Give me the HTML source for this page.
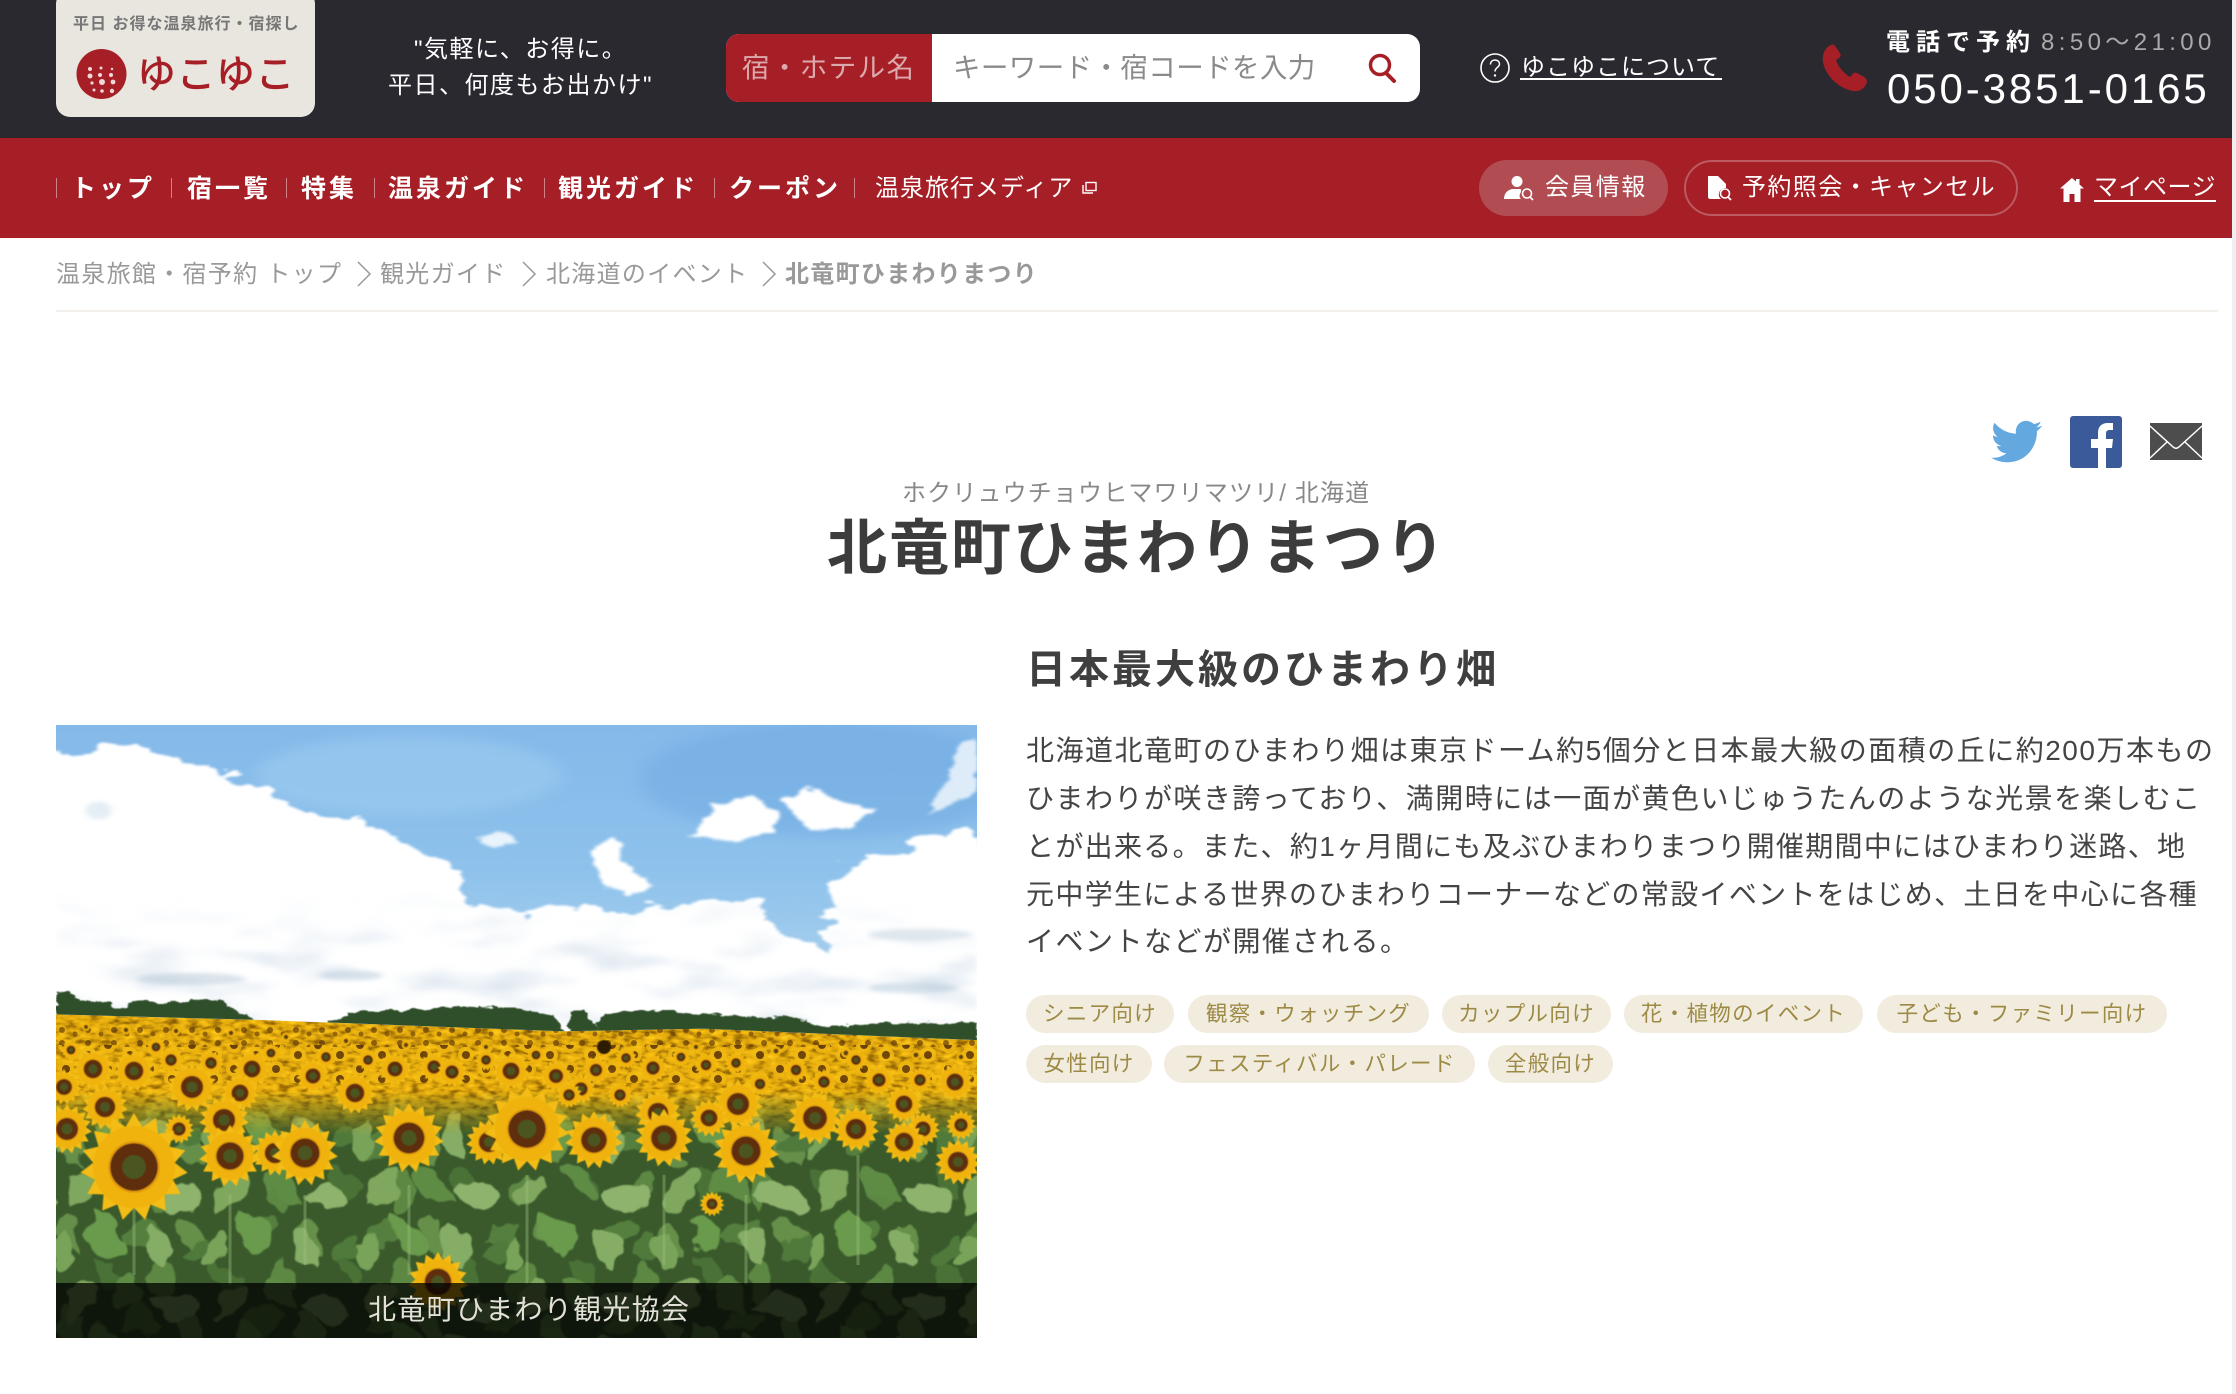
<!DOCTYPE html>
<html lang="ja"><head><meta charset="utf-8"><title>北竜町ひまわりまつり</title>
<style>
html,body{margin:0;padding:0;background:#fff}
#p{position:relative;width:2236px;height:1394px;overflow:hidden;background:#fff;font-family:"Liberation Sans","Noto Sans CJK JP",sans-serif}
.b{position:absolute}
.t{position:absolute;white-space:nowrap;line-height:40px;height:40px}
.w{color:#fff}
.n{font-size:25px;font-weight:700;letter-spacing:3px;color:#fff;top:169px}
.s{position:absolute;width:1px;height:20px;top:178px;background:rgba(255,255,255,.45)}
.c{font-size:24px;letter-spacing:1.300px;color:#999;top:255px}
.l{font-size:28px;letter-spacing:1.500px;color:#444;left:1026px}
.g{position:absolute;height:38px;line-height:38px;border-radius:19px;background:#f2ecdf;color:#9c8a45;font-size:21.500px;letter-spacing:1.300px;text-align:center;white-space:nowrap}
svg{position:absolute;overflow:visible}
</style></head><body><div id="p">
<div class="b" style="left:0;top:0;width:2232px;height:138px;background:#2a2930"></div>
<div class="b" style="left:0;top:138px;width:2232px;height:100px;background:#a71f26"></div>
<div class="b" style="left:2232px;top:0;width:4px;height:1394px;background:#efefef"></div>

<div class="b" style="left:56px;top:-10px;width:259px;height:127px;background:#e9e6df;border-radius:14px"></div>
<div class="t" style="left:73px;top:5px;font-size:16px;font-weight:700;letter-spacing:1px;color:#777">平日 お得な温泉旅行・宿探し</div>
<svg style="left:0;top:0" width="320" height="120"><circle cx="101.500" cy="74" r="25" fill="#a71f26"/><g fill="#f0d8d8"><circle cx="90" cy="69" r="2"/><circle cx="101" cy="68" r="1.500"/><circle cx="112" cy="69" r="1.200"/><circle cx="90" cy="76" r="2.500"/><circle cx="100" cy="75" r="2"/><circle cx="111" cy="75" r="2"/><circle cx="92" cy="83" r="1.600"/><circle cx="102" cy="82" r="3"/><circle cx="113" cy="82" r="2.400"/><circle cx="94" cy="90" r="1.500"/><circle cx="102" cy="91" r="1.800"/><circle cx="112" cy="91" r="2.200"/></g></svg>
<div class="t" style="left:137px;top:56px;font-size:39px;font-weight:500;letter-spacing:.5px;color:#a71f26">ゆこゆこ</div>

<div class="t w" style="left:414px;top:30px;font-size:24px;letter-spacing:1.500px">"気軽に、お得に。</div>
<div class="t w" style="left:388px;top:66px;font-size:24px;letter-spacing:1.500px">平日、何度もお出かけ"</div>

<div class="b" style="left:726px;top:34px;width:694px;height:68px;background:#fff;border-radius:13px"></div>
<div class="b" style="left:726px;top:34px;width:206px;height:68px;background:#a71f26;border-radius:13px 0 0 13px"></div>
<div class="t" style="left:742px;top:48px;font-size:27.500px;letter-spacing:1.400px;color:#dba9ac">宿・ホテル名</div>
<div class="t" style="left:953px;top:48px;font-size:27.500px;letter-spacing:.4px;color:#8a8a8a">キーワード・宿コードを入力</div>
<svg style="left:0;top:0" width="1440" height="110"><circle cx="1380" cy="65" r="9.500" fill="none" stroke="#a71f26" stroke-width="3.500"/><path d="M1386 73L1394 81" stroke="#a71f26" stroke-width="4" stroke-linecap="round"/></svg>

<svg style="left:1480px;top:52px" width="30" height="32"><circle cx="15" cy="16" r="14" fill="none" stroke="#fff" stroke-width="1.600"/><path d="M10.500 12.500C10.500 9.500 12.500 8 15 8C17.800 8 19.500 9.800 19.500 12C19.500 15.500 15 15.500 15 19.500" fill="none" stroke="#fff" stroke-width="1.500"/><circle cx="15" cy="23.500" r="1.200" fill="#fff"/></svg>
<div class="t w" style="left:1521px;top:48px;font-size:24px;letter-spacing:1px">ゆこゆこについて</div>
<div class="b" style="left:1520px;top:78px;width:202px;height:2px;background:#fff"></div>

<svg style="left:1823px;top:44px" width="44" height="48"><path fill="#a71f26" d="M8 1C3 3-1 9 0 18C2 30 14 44 30 47C36 48 42 45 44 38C44 36 43 34 41 33L34 29C32 28 30 29 29 31L27 33C20 29 15 22 13 16L16 14C18 13 18 11 17 9L12 2C11 0 9 0 8 1Z"/></svg>
<div class="t w" style="left:1886px;top:23px;font-size:24px;font-weight:700;letter-spacing:6px">電話で予約</div>
<div class="t" style="left:2041px;top:23px;font-size:24px;letter-spacing:4.400px;color:#a9a9a9">8:50〜21:00</div>
<div class="t w" style="left:1887px;top:69px;font-size:42px;letter-spacing:2.900px">050-3851-0165</div>

<div class="s" style="left:56px"></div><div class="s" style="left:171px"></div><div class="s" style="left:286px"></div><div class="s" style="left:374px"></div><div class="s" style="left:544px"></div><div class="s" style="left:714px"></div><div class="s" style="left:854px"></div>
<div class="t n" style="left:71px">トップ</div>
<div class="t n" style="left:187px">宿一覧</div>
<div class="t n" style="left:301px">特集</div>
<div class="t n" style="left:388px">温泉ガイド</div>
<div class="t n" style="left:558px">観光ガイド</div>
<div class="t n" style="left:729px">クーポン</div>
<div class="t w" style="left:875px;top:169px;font-size:24px;letter-spacing:1px">温泉旅行メディア</div>
<svg style="left:1082px;top:181px" width="16" height="14" fill="none" stroke="#fff" stroke-width="1.400"><rect x="4" y="1.500" width="10" height="8"/><path d="M1 4V12H11"/></svg>

<div class="b" style="left:1479px;top:160px;width:189px;height:56px;border-radius:28px;background:#b14c53"></div>
<div class="b" style="left:1684px;top:160px;width:330px;height:52px;border-radius:28px;border:2px solid #bb5a60"></div>
<svg style="left:1500px;top:172px" width="40" height="32"><circle cx="17" cy="9.500" r="5.500" fill="#fff"/><path fill="#fff" d="M4 27C4 21 8 17 14 17H20C22 17 21 20 20 22C19 24 20 26 21 27Z"/><circle cx="27" cy="21.500" r="4.500" fill="none" stroke="#fff" stroke-width="1.600"/><path d="M30 25L33 28" stroke="#fff" stroke-width="1.800"/></svg>
<div class="t w" style="left:1545px;top:168px;font-size:24px;letter-spacing:1.400px">会員情報</div>
<svg style="left:1705px;top:172px" width="36" height="32"><path fill="#fff" d="M3 4H13L21 12V16C16 16 13 20 14 24C14.500 25.500 15 26 16 27H5C4 27 3 26 3 25Z"/><circle cx="20" cy="21.500" r="4.500" fill="none" stroke="#fff" stroke-width="1.600"/><path d="M23 25L26 28" stroke="#fff" stroke-width="1.800"/></svg>
<div class="t w" style="left:1742px;top:168px;font-size:24px;letter-spacing:1.400px">予約照会・キャンセル</div>
<svg style="left:2060px;top:178px" width="24" height="24"><path fill="#fff" d="M12 0L16 3.500V1H19.500V6.500L24 10.500H20.500V24H14.500V16H9.500V24H3.500V10.500H0Z"/></svg>
<div class="t w" style="left:2094px;top:168px;font-size:24px;letter-spacing:.5px">マイページ</div>
<div class="b" style="left:2094px;top:200px;width:122px;height:2px;background:#fff"></div>

<div class="t c" style="left:56px">温泉旅館・宿予約 トップ</div>
<div class="t c" style="left:380px">観光ガイド</div>
<div class="t c" style="left:546px">北海道のイベント</div>
<div class="t c" style="left:785px;font-weight:700">北竜町ひまわりまつり</div>
<svg style="left:0;top:255px" width="800" height="40" fill="none" stroke="#999" stroke-width="1.500"><path d="M358 7L370 19L358 31M523 7L535 19L523 31M763 7L775 19L763 31"/></svg>
<div class="b" style="left:56px;top:310px;width:2162px;height:2px;background:#f3f0eb"></div>

<svg style="left:1991px;top:416px" width="52" height="50"><path fill="#64a8e0" transform="scale(2.130)" d="M23.950 4.570a10 10 0 0 1-2.830.78 4.960 4.960 0 0 0 2.160-2.720 9.900 9.900 0 0 1-3.130 1.200 4.920 4.920 0 0 0-8.390 4.480C7.690 8.100 4.070 6.130 1.640 3.160a4.820 4.820 0 0 0-.67 2.480c0 1.710.87 3.210 2.190 4.100a4.900 4.900 0 0 1-2.230-.62v.06a4.920 4.920 0 0 0 3.950 4.830 5 5 0 0 1-2.210.08 4.940 4.940 0 0 0 4.600 3.420A9.870 9.870 0 0 1 0 19.540a13.940 13.940 0 0 0 7.550 2.210c9.050 0 14-7.500 14-13.980 0-.21 0-.42-.02-.63a9.940 9.940 0 0 0 2.460-2.550z"/></svg>
<svg style="left:0;top:0" width="2236" height="500"><rect x="2070" y="416" width="52" height="52" rx="3" fill="#3b5a9a"/><path fill="#fff" d="M2106 468V448H2112L2113 439H2106V434C2106 431 2107 430 2110 430H2113V423H2108C2101 423 2098 427 2098 433V439H2091V448H2098V468Z"/><rect x="2150" y="423" width="52" height="37" fill="#4d4d4d"/><path fill="none" stroke="#fff" stroke-width="1.500" d="M2150 426L2172 446C2175 449 2177 449 2180 446L2202 426M2150 458L2167 442M2202 458L2185 442"/></svg>

<div class="t" style="left:902px;top:474px;font-size:24px;letter-spacing:1.150px;color:#888">ホクリュウチョウヒマワリマツリ/ 北海道</div>
<div class="t" style="left:827px;top:529px;font-size:60px;font-weight:700;letter-spacing:2px;color:#3c3c3c">北竜町ひまわりまつり</div>
<div class="t" style="left:1026px;top:650px;font-size:40px;font-weight:700;letter-spacing:3px;color:#3f3f3f">日本最大級のひまわり畑</div>
<div class="t l" style="top:731px">北海道北竜町のひまわり畑は東京ドーム約5個分と日本最大級の面積の丘に約200万本もの</div>
<div class="t l" style="top:779px;letter-spacing:1.470px">ひまわりが咲き誇っており、満開時には一面が黄色いじゅうたんのような光景を楽しむこ</div>
<div class="t l" style="top:827px;letter-spacing:1.320px">とが出来る。また、約1ヶ月間にも及ぶひまわりまつり開催期間中にはひまわり迷路、地</div>
<div class="t l" style="top:875px;letter-spacing:1.320px">元中学生による世界のひまわりコーナーなどの常設イベントをはじめ、土日を中心に各種</div>
<div class="t l" style="top:922px">イベントなどが開催される。</div>

<div class="g" style="left:1026px;top:995px;width:148px">シニア向け</div>
<div class="g" style="left:1188px;top:995px;width:241px">観察・ウォッチング</div>
<div class="g" style="left:1442px;top:995px;width:169px">カップル向け</div>
<div class="g" style="left:1624px;top:995px;width:239px">花・植物のイベント</div>
<div class="g" style="left:1877px;top:995px;width:290px">子ども・ファミリー向け</div>
<div class="g" style="left:1026px;top:1045px;width:126px">女性向け</div>
<div class="g" style="left:1164px;top:1045px;width:311px">フェスティバル・パレード</div>
<div class="g" style="left:1488px;top:1045px;width:125px">全般向け</div>

<svg style="left:56px;top:725px;overflow:hidden" width="921" height="613" viewBox="0 0 921 613">
<defs>
<filter id="lf" x="-.05" y="-.05" width="1.100" height="1.100" color-interpolation-filters="sRGB"><feTurbulence type="fractalNoise" baseFrequency=".03" numOctaves="3" seed="11" result="n"/><feDisplacementMap in="SourceGraphic" in2="n" scale="26" xChannelSelector="R" yChannelSelector="G" result="d"/><feGaussianBlur in="d" stdDeviation=".8"/></filter>
<filter id="yn" x="0" y="0" width="1" height="1" color-interpolation-filters="sRGB"><feTurbulence type="fractalNoise" baseFrequency=".09 .2" numOctaves="2" seed="3"/><feColorMatrix values="1 0 0 0 0 1 0 0 0 0 1 0 0 0 0 0 0 0 0 1"/><feComponentTransfer><feFuncR type="table" tableValues=".45 .6 .88 .98 1"/><feFuncG type="table" tableValues=".28 .42 .66 .76 .85"/><feFuncB type="table" tableValues="0 .02 .05 .08 .15"/></feComponentTransfer></filter>
<filter id="cl" x="-.1" y="-.1" width="1.200" height="1.200" color-interpolation-filters="sRGB"><feTurbulence type="fractalNoise" baseFrequency=".014 .024" numOctaves="4" seed="5" result="n"/><feDisplacementMap in="SourceGraphic" in2="n" scale="75" xChannelSelector="R" yChannelSelector="G"/><feGaussianBlur stdDeviation="2.500"/></filter>
<filter id="cs" x="-.3" y="-.3" width="1.600" height="1.600" color-interpolation-filters="sRGB"><feTurbulence type="fractalNoise" baseFrequency=".03 .05" numOctaves="3" seed="9" result="n"/><feDisplacementMap in="SourceGraphic" in2="n" scale="28" xChannelSelector="R" yChannelSelector="G"/><feGaussianBlur stdDeviation="3"/></filter>
<filter id="tr" x="-.05" y="-.3" width="1.100" height="1.600" color-interpolation-filters="sRGB"><feTurbulence type="fractalNoise" baseFrequency=".05 .08" numOctaves="3" seed="4" result="n"/><feDisplacementMap in="SourceGraphic" in2="n" scale="18" xChannelSelector="R" yChannelSelector="G"/><feGaussianBlur stdDeviation="1"/></filter>
<filter id="mt" x="0" y="0" width="1" height="1" color-interpolation-filters="sRGB"><feTurbulence type="fractalNoise" baseFrequency=".007 .018" numOctaves="3" seed="21"/><feColorMatrix values="0 0 0 0 .66 0 0 0 0 .76 0 0 0 0 .85 2.600 0 0 0 -1.250"/><feGaussianBlur stdDeviation="6"/></filter>
<filter id="bl"><feGaussianBlur stdDeviation="5"/></filter>
<filter id="bl2"><feGaussianBlur stdDeviation="14"/></filter>
<filter id="sf"><feGaussianBlur stdDeviation=".5"/></filter>
<linearGradient id="sky" x1="0" y1="0" x2="0" y2="1"><stop offset="0" stop-color="#84b9e9"/><stop offset=".45" stop-color="#8ec2ec"/><stop offset="1" stop-color="#b7d8ef"/></linearGradient>
<linearGradient id="fd" x1="0" y1="0" x2="0" y2="1"><stop offset="0" stop-color="#fff"/><stop offset=".65" stop-color="#fff"/><stop offset="1" stop-color="#000"/></linearGradient>
<mask id="ym"><rect x="0" y="285" width="921" height="125" fill="url(#fd)"/></mask>
<clipPath id="hz"><path d="M88 57H1530V768L1100 742L880 748L400 722L88 710Z"/></clipPath>
<linearGradient id="cm" x1="0" y1="0" x2="0" y2="1"><stop offset="0" stop-color="#000"/><stop offset=".4" stop-color="#fff"/></linearGradient>
<mask id="mm" maskUnits="userSpaceOnUse" x="88" y="430" width="1442" height="320"><rect x="88" y="430" width="1442" height="320" fill="url(#cm)"/></mask>
<pattern id="s1" width="26" height="13" patternUnits="userSpaceOnUse"><circle cx="6" cy="6" r="3" fill="#5c3508"/><circle cx="19" cy="10" r="2.500" fill="#6a3f08"/></pattern>
<pattern id="s2" width="42" height="24" patternUnits="userSpaceOnUse"><circle cx="10" cy="8" r="8" fill="#efb610"/><circle cx="10" cy="8" r="4" fill="#5c3508"/><circle cx="32" cy="18" r="8" fill="#f2bb12"/><circle cx="32" cy="18" r="4" fill="#5c3508"/></pattern>
<path id="lv" d="M0-22C15-18 19 6 0 24C-19 6-15-18 0-22Z"/>
<pattern id="lp" width="150" height="110" patternUnits="userSpaceOnUse">
<use href="#lv" fill="#7fa75e" transform="translate(25 25) rotate(35)"/><use href="#lv" fill="#5f8c45" transform="translate(75 20) rotate(-50)"/><use href="#lv" fill="#8db36d" transform="translate(122 32) rotate(100) scale(1.100)"/><use href="#lv" fill="#6a9a4c" transform="translate(50 70) rotate(150) scale(1.100)"/><use href="#lv" fill="#86ad66" transform="translate(100 82) rotate(-20)"/><use href="#lv" fill="#4f7a3b" transform="translate(142 85) rotate(60) scale(.8)"/><use href="#lv" fill="#79a359" transform="translate(8 85) rotate(200) scale(.8)"/>
</pattern>
<pattern id="lq" width="120" height="90" patternUnits="userSpaceOnUse" patternTransform="translate(65 38)">
<use href="#lv" fill="#557f3e" transform="translate(20 20) rotate(70) scale(.9)"/><use href="#lv" fill="#668f49" transform="translate(70 25) rotate(-30) scale(.9)"/><use href="#lv" fill="#4a7236" transform="translate(105 60) rotate(140) scale(.8)"/><use href="#lv" fill="#5d8843" transform="translate(40 68) rotate(10) scale(.9)"/>
</pattern>
<path id="pt" d="M-11-32L0-50L11-32Z" fill="#f3bc12"/>
<g id="f"><use href="#pt"/><use href="#pt" transform="rotate(24)"/><use href="#pt" transform="rotate(48)"/><use href="#pt" transform="rotate(72)"/><use href="#pt" transform="rotate(96)"/><use href="#pt" transform="rotate(120)"/><use href="#pt" transform="rotate(144)"/><use href="#pt" transform="rotate(168)"/><use href="#pt" transform="rotate(192)"/><use href="#pt" transform="rotate(216)"/><use href="#pt" transform="rotate(240)"/><use href="#pt" transform="rotate(264)"/><use href="#pt" transform="rotate(288)"/><use href="#pt" transform="rotate(312)"/><use href="#pt" transform="rotate(336)"/><circle r="38" fill="#f0b30e"/><circle r="24" fill="#e19a0a"/><circle r="22" fill="#5e2f08"/><circle r="11" fill="#4c5420"/></g>
</defs>
<rect width="921" height="613" fill="#3a5a2c"/>
<rect x="-20" y="330" width="961" height="300" fill="url(#lq)" filter="url(#lf)"/>
<rect x="-20" y="330" width="961" height="300" fill="url(#lp)" filter="url(#lf)"/>
<g stroke="#9fc07f" stroke-width="3" opacity=".4"><path d="M78 480V550M174 470V560M249 470V540M471 450V560M608 450V540M690 470V560M802 430V540M353 460V550"/></g>
<g mask="url(#ym)"><rect y="285" width="921" height="125" fill="#e6a90c" filter="url(#yn)"/></g>
<rect y="300" width="921" height="22" fill="url(#s1)" opacity=".65"/>
<rect y="320" width="921" height="38" fill="url(#s2)" opacity=".85"/>

<svg x="0" y="0" width="921" height="613" viewBox="88 57 1442 1383" preserveAspectRatio="none">
<g clip-path="url(#hz)">
<rect x="88" y="57" width="1442" height="720" fill="url(#sky)"/>
<ellipse cx="1300" cy="180" rx="300" ry="130" fill="#6ea8e2" opacity=".45" filter="url(#bl2)"/>
<ellipse cx="640" cy="170" rx="240" ry="90" fill="#a0cff1" opacity=".5" filter="url(#bl2)"/>
<g filter="url(#cl)" fill="#fff"><path d="M60 105L150 115L230 110L290 140L370 170L420 200L510 285L560 265L620 310L690 360L722 395L730 450L800 482L900 470L1050 465L1180 450L1220 525L1300 575L1290 520L1315 370L1420 340L1500 290L1570 320V820H60Z"/></g>
<g filter="url(#cs)" fill="#fff"><path d="M1080 310L1120 240L1180 215L1215 260L1215 300L1150 320Z"/><path d="M1225 225L1260 195L1310 225L1370 245L1330 290L1265 295Z"/><path d="M925 340L965 305L975 370L1020 415L985 440L950 425Z"/><path d="M750 315L790 298L815 320L780 332Z" opacity=".8"/><path d="M1450 260L1480 180L1505 95L1530 90V205Z" opacity=".75"/></g>
<g mask="url(#mm)"><rect x="88" y="430" width="1442" height="320" filter="url(#mt)" opacity=".4"/></g>
<g filter="url(#bl)" opacity=".5"><ellipse cx="300" cy="630" rx="85" ry="14" fill="#b7c8d6"/><ellipse cx="550" cy="622" rx="50" ry="11" fill="#b4c8d8"/><ellipse cx="1430" cy="650" rx="70" ry="12" fill="#b4c8d8"/><ellipse cx="1440" cy="530" rx="80" ry="14" fill="#c4d3df"/><ellipse cx="155" cy="250" rx="20" ry="20" fill="#c8dcea"/></g>
<g fill="#2f4f2b" filter="url(#tr)"><path d="M88 656L105 655L125 680L160 678L185 695L230 676L260 685L300 675L345 680L395 722L400 740L88 730Z"/><path d="M510 727L560 706L640 700L720 692L800 695L870 712L885 760L540 750Z"/><path d="M885 757L895 705L915 700L935 738L945 708L975 703L1040 700L1100 708L1150 715L1230 715L1300 738L1400 728L1530 728V790L1100 760Z"/></g>
</g>
</svg>

<g filter="url(#sf)">
<use href="#f" transform="translate(30 302) scale(.09)"/><use href="#f" transform="translate(70 305) scale(.1)"/><use href="#f" transform="translate(120 306) scale(.1)"/><use href="#f" transform="translate(175 308) scale(.1)"/><use href="#f" transform="translate(230 312) scale(.1)"/><use href="#f" transform="translate(290 316) scale(.1)"/><use href="#f" transform="translate(350 320) scale(.1)"/><use href="#f" transform="translate(430 322) scale(.1)"/><use href="#f" transform="translate(640 322) scale(.1)"/><use href="#f" transform="translate(720 326) scale(.11)"/><use href="#f" transform="translate(790 328) scale(.11)"/><use href="#f" transform="translate(860 330) scale(.11)"/><use href="#f" transform="translate(905 332) scale(.1)"/>
<use href="#f" transform="translate(15 325) scale(.2)"/><use href="#f" transform="translate(100 322) scale(.2)"/><use href="#f" transform="translate(215 328) scale(.2)"/><use href="#f" transform="translate(270 332) scale(.22)"/><use href="#f" transform="translate(312 335) scale(.22)"/><use href="#f" transform="translate(430 335) scale(.22)"/><use href="#f" transform="translate(480 330) scale(.2)"/><use href="#f" transform="translate(570 333) scale(.22)"/><use href="#f" transform="translate(625 332) scale(.2)"/><use href="#f" transform="translate(680 338) scale(.22)"/><use href="#f" transform="translate(800 335) scale(.22)"/>
<use href="#f" transform="translate(8 362) scale(.36)"/><use href="#f" transform="translate(37 344) scale(.42)"/><use href="#f" transform="translate(78 346) scale(.42)"/><use href="#f" transform="translate(115 335) scale(.26)"/><use href="#f" transform="translate(155 338) scale(.26)"/><use href="#f" transform="translate(196 344) scale(.38)"/><use href="#f" transform="translate(257 351) scale(.34)"/><use href="#f" transform="translate(339 344) scale(.34)"/><use href="#f" transform="translate(378 342) scale(.3)"/><use href="#f" transform="translate(396 347) scale(.3)"/><use href="#f" transform="translate(455 346) scale(.38)"/><use href="#f" transform="translate(500 351) scale(.32)"/><use href="#f" transform="translate(540 345) scale(.28)"/><use href="#f" transform="translate(597 343) scale(.3)"/><use href="#f" transform="translate(650 340) scale(.24)"/><use href="#f" transform="translate(704 359) scale(.24)"/><use href="#f" transform="translate(740 345) scale(.24)"/><use href="#f" transform="translate(768 357) scale(.26)"/><use href="#f" transform="translate(823 355) scale(.3)"/><use href="#f" transform="translate(864 355) scale(.26)"/><use href="#f" transform="translate(899 357) scale(.38)"/>
<circle cx="548" cy="322" r="7" fill="#2e1a06"/>
<use href="#f" transform="translate(136 362) scale(.5)"/><use href="#f" transform="translate(184 368) scale(.38)"/><use href="#f" transform="translate(299 368) scale(.42)"/><use href="#f" transform="translate(564 370) scale(.26)"/><use href="#f" transform="translate(525 364) scale(.3)"/><use href="#f" transform="translate(513 370) scale(.26)"/><use href="#f" transform="translate(848 379) scale(.38)"/><use href="#f" transform="translate(682 379) scale(.5)"/><use href="#f" transform="translate(49 382) scale(.46)"/><use href="#f" transform="translate(602 388) scale(.46)"/><use href="#f" transform="translate(653 393) scale(.38)"/><use href="#f" transform="translate(759 393) scale(.54)"/><use href="#f" transform="translate(168 395) scale(.5)"/><use href="#f" transform="translate(905 400) scale(.3)"/>
<use href="#f" transform="translate(11 404) scale(.5)"/><use href="#f" transform="translate(123 404) scale(.3)"/><use href="#f" transform="translate(867 404) scale(.34)"/><use href="#f" transform="translate(800 404) scale(.46)"/><use href="#f" transform="translate(608 413) scale(.58)"/><use href="#f" transform="translate(538 415) scale(.58)"/><use href="#f" transform="translate(353 413) scale(.7)"/><use href="#f" transform="translate(433 417) scale(.46)"/><use href="#f" transform="translate(471 404) scale(.85)"/><use href="#f" transform="translate(848 417) scale(.42)"/><use href="#f" transform="translate(219 428) scale(.46)"/><use href="#f" transform="translate(249 428) scale(.66)"/><use href="#f" transform="translate(174 431) scale(.62)"/><use href="#f" transform="translate(690 426) scale(.66)"/><use href="#f" transform="translate(902 437) scale(.46)"/><use href="#f" transform="translate(78 442) scale(1.080)"/><use href="#f" transform="translate(656 479) scale(.25)"/><use href="#f" transform="translate(382 557) scale(.6)"/>
</g>
<rect y="558" width="921" height="55" fill="#000" opacity=".75"/>
</svg>
<div class="t" style="left:368px;top:1290px;font-size:28px;letter-spacing:1.300px;color:#e2e1d8">北竜町ひまわり観光協会</div>
</div></body></html>
